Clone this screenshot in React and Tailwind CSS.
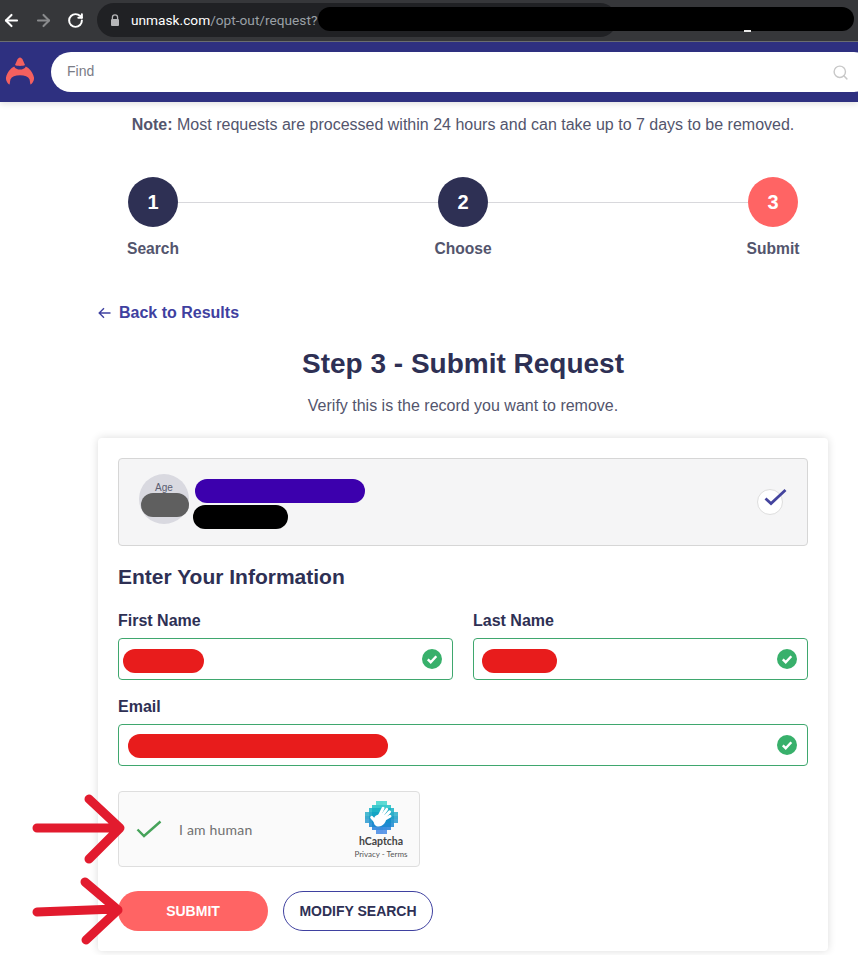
import React from "react";
import { ArrowLeft, ArrowRight, RotateCw, Search } from "lucide-react";

function Blob({ className }) {
  return <div className={"absolute rounded-full " + className} />;
}

function Step({ n, label, active }) {
  return (
    <div className="flex w-[50px] flex-col items-center">
      <div className={"flex h-[50px] w-[50px] items-center justify-center rounded-full text-[20px] font-bold text-white " + (active ? "bg-[#ff6464]" : "bg-[#2e3054]")}>
        {n}
      </div>
      <div className="mt-[10px] whitespace-nowrap text-[15.6px] font-bold leading-6 text-[#53556d]">{label}</div>
    </div>
  );
}

function ValidCheck() {
  return (
    <svg width="20" height="20" viewBox="0 0 20 20" className="shrink-0">
      <circle cx="10" cy="10" r="10" fill="#38b06b" />
      <path d="M5.8 10.4 8.7 13.2 14.3 7.2" fill="none" stroke="#fff" strokeWidth="2.4" />
    </svg>
  );
}

function Field({ label, blob, className }) {
  return (
    <div className={className}>
      <div className="text-base font-bold leading-6 text-[#2e3054]">{label}</div>
      <div className="relative mt-[5px] flex h-[42px] items-center justify-end rounded border border-[#3fa76e] bg-white pr-[10px]">
        <Blob className={"bg-[#e81c1c] " + blob} />
        <ValidCheck />
      </div>
    </div>
  );
}

const ROWS = [3, 5, 7, 9, 9, 9, 7, 5, 3];
const TOP = [47, 208, 200];
const MID = [12, 150, 195];
const BOT = [50, 125, 225];

function mix(a, b, t) {
  return a.map((v, i) => Math.round(v + (b[i] - v) * t));
}

function cellColour(x, y) {
  const t = y / 8;
  const base = t < 0.5 ? mix(TOP, MID, t * 2) : mix(MID, BOT, (t - 0.5) * 2);
  const d = Math.max(Math.abs(x - 4), Math.abs(y - 4)) + (Math.abs(x - 4) + Math.abs(y - 4)) / 4;
  const light = Math.min(0.4, Math.max(0, (d - 3) * 0.1));
  const c = mix(base, [255, 255, 255], light);
  return `rgb(${c[0]},${c[1]},${c[2]})`;
}

function HLogo() {
  const cells = [];
  ROWS.forEach((w, y) => {
    const start = (9 - w) / 2;
    for (let i = 0; i < w; i++) {
      const x = start + i;
      cells.push(<rect key={x + "-" + y} x={x} y={y} width="1.02" height="1.02" fill={cellColour(x, y)} />);
    }
  });
  return (
    <svg width="33" height="33" viewBox="0 0 9 9" className="mt-[2px]">
      <g shapeRendering="crispEdges">{cells}</g>
      <g transform="translate(-0.45 -0.45) scale(1.1)">
        <g fill="none" stroke="#fff" strokeLinecap="round" strokeWidth="0.72">
          <path d="M4 4 L4.9 2.2" />
          <path d="M4.6 4.1 L5.8 2.45" />
          <path d="M5 4.6 L6.5 3.1" />
          <path d="M5.2 5 L6.6 4.2" />
          <path d="M2.1 4.5 L3 5.5" strokeWidth="0.8" />
        </g>
        <path d="M2.8 4.3 C3.3 3.6 4.5 3.5 5.2 3.9 C5.9 4.4 5.7 5.4 5.2 6 C4.5 6.9 3.4 7 2.8 6.3 C2.5 5.8 2.4 4.9 2.8 4.3 Z" fill="#fff" />
      </g>
    </svg>
  );
}

export default function App() {
  return (
    <div className="relative h-[955px] w-[858px] overflow-hidden bg-white font-['Liberation_Sans',Arial,sans-serif]">
      {/* browser toolbar */}
      <div className="relative flex h-[42px] items-start border-b border-[#6b6e70] bg-[#36373a]">
        <div className="flex h-[41px] items-center">
          <ArrowLeft size={19} strokeWidth={2.6} className="ml-[2px] text-white" />
          <ArrowRight size={19} strokeWidth={2.6} className="ml-[13px] text-[#8a8b8d]" />
          <RotateCw size={17} strokeWidth={2.8} className="ml-[14px] text-white" />
        </div>
        <div className="ml-[13px] mt-[3px] flex h-[34px] w-[520px] items-center rounded-full bg-[#202124] pl-[13px]">
          <svg width="10" height="12" viewBox="0 0 10 12" className="shrink-0">
            <path d="M2.4 5V3.4a2.6 2.6 0 0 1 5.2 0V5" fill="none" stroke="#b5b6b8" strokeWidth="1.3" />
            <rect x="1" y="5" width="8" height="7" rx="1" fill="#b5b6b8" />
          </svg>
          <span className="ml-[11px] font-['Roboto',sans-serif] text-[13.7px] text-white">unmask.com</span>
          <span className="font-['Roboto',sans-serif] text-[13.7px] text-[#9aa0a6]">/opt-out/request?</span>
        </div>
        <Blob className="left-[318px] top-[7px] h-[24px] w-[536px] bg-black" />
        <div className="absolute left-[744px] top-[30px] h-[2px] w-[7px] bg-[#e8e8e8]" />
      </div>

      {/* site header */}
      <div className="flex h-[60px] items-center bg-[#2e3080] shadow-[0_2px_6px_rgba(0,0,0,0.12)]">
        <svg width="30" height="30" viewBox="0 0 30 30" className="ml-[5px] shrink-0">
          <path d="M15 0.5 C13.8 0.5 13 1.5 12.4 2.5 L10 8 C12 9.2 18 9.2 20 8 L17.6 2.5 C17 1.5 16.2 0.5 15 0.5 Z" fill="#f4605f" />
          <path d="M9.2 9.4 C11 13.6 19 13.6 20.8 9.4 C24 10.8 27.8 15 29 20.5 C29.4 24 27 27 25.4 27.4 L24.6 22.4 C23.2 19.6 19.8 18.2 15 18.2 C10.2 18.2 6.8 19.6 5.4 22.4 L4.6 27.4 C3 27 .6 24 1 20.5 C2.2 15 6 10.8 9.2 9.4 Z" fill="#f4605f" />
        </svg>
        <div className="ml-[16px] -mr-4 flex h-10 flex-1 items-center rounded-[20px] bg-white pl-4 pr-[25px]">
          <span className="flex-1 pb-[2px] text-[14px] text-[#7a7c86]">Find</span>
          <Search size={17} className="text-[#c8c8c8]" />
        </div>
      </div>

      {/* page body */}
      <p className="mt-[11px] pl-[68px] text-center text-base leading-6 text-[#53556d]">
        <b>Note:</b> Most requests are processed within 24 hours and can take up to 7 days to be removed.
      </p>

      <div className="ml-[128px] mt-[40px] flex w-[670px] items-start">
        <Step n="1" label="Search" />
        <div className="mt-[25px] h-px flex-1 bg-[#d8d8dc]" />
        <Step n="2" label="Choose" />
        <div className="mt-[25px] h-px flex-1 bg-[#d8d8dc]" />
        <Step n="3" label="Submit" active />
      </div>

      <div className="ml-[98px] mt-[40px] flex h-6 items-center gap-[8px] text-base font-bold text-[#3f41a0]">
        <svg width="13" height="12" viewBox="0 0 13 12" className="shrink-0">
          <path d="M12.5 6H1.5M6 1.2 1.2 6 6 10.8" fill="none" stroke="#3f41a0" strokeWidth="1.4" />
        </svg>
        <span>Back to Results</span>
      </div>

      <h1 className="ml-[98px] mt-[19px] w-[730px] text-center text-[28px] font-bold leading-[40px] text-[#2e3054]">
        Step 3 - Submit Request
      </h1>
      <p className="ml-[98px] mt-[10px] w-[730px] text-center text-base leading-6 text-[#53556d]">
        Verify this is the record you want to remove.
      </p>

      {/* card */}
      <div className="ml-[98px] mt-[20px] h-[513px] w-[730px] rounded bg-white p-5 shadow-[0_0_8px_rgba(0,0,0,0.14)]">
        <div className="relative flex h-[88px] items-center rounded border border-[#d6d6d6] bg-[#f5f5f6] pl-5 pr-[20px]">
          <div className="mb-[6px] h-[50px] w-[50px] rounded-full bg-[#d9d9e0] text-center text-[10px] leading-[28px] text-[#5b5d70]">
            Age
          </div>
          <Blob className="left-[22px] top-[34px] h-[24px] w-[48px] bg-[#5f5f5f]" />
          <Blob className="left-[76px] top-[20px] h-[24px] w-[170px] bg-[#3c00ad]" />
          <Blob className="left-[74px] top-[46px] h-[24px] w-[95px] bg-black" />
          <div className="ml-auto h-[26px] w-[26px] translate-x-[-4px] rounded-full border border-[#dedede] bg-white" />
          <svg width="24" height="18" viewBox="0 0 24 18" className="absolute left-[644px] top-[29px]">
            <path d="M2.5 10.5 8 15.5 22.5 2" fill="none" stroke="#44449e" strokeWidth="2.8" />
          </svg>
        </div>

        <h2 className="mt-[19px] text-[21px] font-bold leading-[24px] text-[#2e3054]">Enter Your Information</h2>

        <div className="mt-[20px] flex gap-5">
          <Field label="First Name" blob="left-[4px] top-[10px] h-[24px] w-[81px]" className="flex-1" />
          <Field label="Last Name" blob="left-[8px] top-[10px] h-[24px] w-[75px]" className="flex-1" />
        </div>
        <Field label="Email" blob="left-[9px] top-[9px] h-[24px] w-[260px]" className="mt-[15px]" />

        {/* captcha */}
        <div className="mt-[25px] flex h-[76px] w-[302px] items-center rounded border border-[#dedede] bg-[#fafafa]">
          <svg width="26" height="18" viewBox="0 0 26 18" className="ml-[17px] shrink-0">
            <path d="M1.5 9.5 8 16 24.5 1.5" fill="none" stroke="#46a35a" strokeWidth="2.4" />
          </svg>
          <span className="ml-[17px] flex-1 font-['Lato',sans-serif] text-[14px] tracking-[0.2px] text-[#707070]">I am human</span>
          <div className="mr-[10px] flex w-[56px] flex-col items-center">
            <HLogo />
            <span className="mt-[1px] font-['Lato',sans-serif] text-[10.5px] font-bold leading-[12px] text-[#444]">hCaptcha</span>
            <span className="mt-[2px] whitespace-nowrap font-['Lato',sans-serif] text-[8px] leading-[10px] text-[#555]">Privacy - Terms</span>
          </div>
        </div>

        <div className="mt-[24px] flex gap-[15px]">
          <div className="flex h-10 w-[150px] items-center justify-center rounded-full bg-[#ff6464] text-[14px] font-bold text-white">
            SUBMIT
          </div>
          <div className="flex h-10 w-[150px] items-center justify-center rounded-full border border-[#3f41a0] text-[14px] font-bold text-[#2e3054]">
            MODIFY SEARCH
          </div>
        </div>
      </div>

      {/* hand-drawn annotation arrows */}
      <svg width="130" height="160" viewBox="0 0 130 160" className="absolute left-[0px] top-[790px]">
        <g fill="none" stroke="#e21b2e" strokeWidth="9" strokeLinecap="round" strokeLinejoin="round">
          <path d="M37 38 H118 M89 9 L120 38 L89 69" />
          <path d="M37 122 L116 119 M85 92 L118 120 L86 150" />
        </g>
      </svg>
    </div>
  );
}
